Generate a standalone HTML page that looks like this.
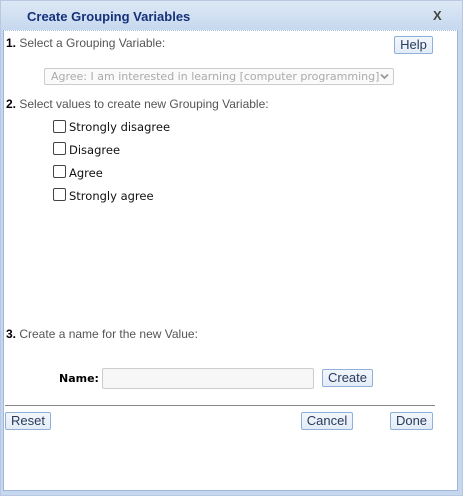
<!DOCTYPE html>
<html><head><style>
body{margin:0;width:463px;height:496px;overflow:hidden;background:#fff;font-family:"Liberation Sans",Arial,sans-serif;position:relative}
.frame{position:absolute;left:0;top:0;width:461px;height:494px;border:1px solid #b8c8e0;background:linear-gradient(#dde8f5,#c6d8ef 30px,#c6d8ef);}
.title{position:absolute;left:27px;top:9px;font-size:13px;font-weight:bold;color:#15317a}
.x{position:absolute;left:433px;top:8px;font-size:13px;font-weight:bold;color:#444}
.panel{position:absolute;left:3px;top:30px;width:453px;height:459px;background:#fff;border:1px solid #9fb6d8;border-top:1px dotted #aac0de}
.a{position:absolute;white-space:nowrap}
.lbl{font-size:12px;color:#555}
.lbl b{color:#000}
.btn{position:absolute;height:16px;border:1px solid #8fb0d8;border-radius:2px;background:linear-gradient(#f3f7fc,#e3ecf7);font-size:13px;color:#2a3a5a;text-align:center;line-height:16px}
.cb{position:absolute;width:11px;height:11px;border:1px solid #444;border-radius:2px;background:#fff;left:53px}
.ct{position:absolute;left:69px;font-family:"DejaVu Sans",Verdana,sans-serif;font-size:11.5px;color:#111}
</style></head><body>
<div class="frame"></div>
<div class="title">Create Grouping Variables</div>
<div class="x">X</div>
<div class="panel"></div>
<div class="a lbl" style="left:6px;top:36px"><b>1.</b> Select a Grouping Variable:</div>
<div class="btn" style="left:394px;top:36px;width:37px;">Help</div>
<div class="a" style="left:44px;top:68px;height:15px;border:1px solid #ccc;border-radius:2px;background:#fafafa;font-family:'DejaVu Sans',sans-serif;font-size:11px;color:#aaa;line-height:15px;padding-left:6px;width:342px;overflow:hidden">Agree: I am interested in learning [computer programming]<svg style="position:absolute;right:4px;top:4px" width="9" height="7" viewBox="0 0 9 7"><path d="M1 1.5L4.5 5L8 1.5" fill="none" stroke="#999" stroke-width="1.8"/></svg></div>
<div class="a lbl" style="left:6px;top:97px"><b>2.</b> Select values to create new Grouping Variable:</div>
<div class="cb" style="top:120px"></div><div class="ct" style="top:120px">Strongly disagree</div>
<div class="cb" style="top:142px"></div><div class="ct" style="top:143px">Disagree</div>
<div class="cb" style="top:165px"></div><div class="ct" style="top:166px">Agree</div>
<div class="cb" style="top:188px"></div><div class="ct" style="top:189px">Strongly agree</div>
<div class="a lbl" style="left:6px;top:327px"><b>3.</b> Create a name for the new Value:</div>
<div class="a" style="left:59px;top:372px;font-family:'DejaVu Sans',sans-serif;font-size:11px;font-weight:bold">Name:</div>
<div class="a" style="left:102px;top:368px;width:210px;height:19px;border:1px solid #ccc;border-radius:2px;background:#f7f7f7"></div>
<div class="btn" style="left:322px;top:369px;width:49px">Create</div>
<div class="a" style="left:5px;top:405px;width:430px;height:1px;background:#888"></div>
<div class="btn" style="left:5px;top:412px;width:44px">Reset</div>
<div class="btn" style="left:301px;top:412px;width:50px">Cancel</div>
<div class="btn" style="left:390px;top:412px;width:41px">Done</div>
</body></html>
